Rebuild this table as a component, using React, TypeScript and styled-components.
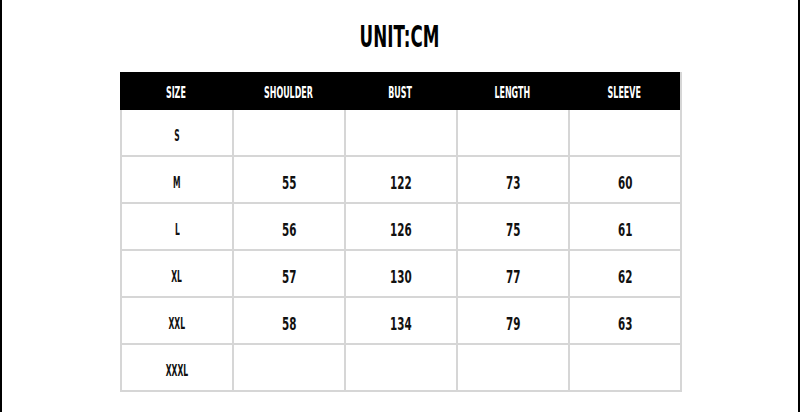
import * as React from 'react';
import styled, { createGlobalStyle } from 'styled-components';

const GlobalStyle = createGlobalStyle`
  html, body {
    margin: 0;
    padding: 0;
    background: #fff;
  }
`;

const LINE = '#d6d6d6';
const FONT = '"DejaVu Sans Condensed", "DejaVu Sans", sans-serif';

interface SizeRow {
  size: string;
  values: string[];
}

const rows: SizeRow[] = [
  { size: 'S', values: ['', '', '', ''] },
  { size: 'M', values: ['55', '122', '73', '60'] },
  { size: 'L', values: ['56', '126', '75', '61'] },
  { size: 'XL', values: ['57', '130', '77', '62'] },
  { size: 'XXL', values: ['58', '134', '79', '63'] },
  { size: 'XXXL', values: ['', '', '', ''] },
];

const headers = ['SIZE', 'SHOULDER', 'BUST', 'LENGTH', 'SLEEVE'];

const Page = styled.div`
  width: 796px;
  height: 412px;
  border-left: 2px solid #000;
  border-right: 2px solid #000;
  display: flex;
  flex-direction: column;
  align-items: center;
  background: #fff;
  font-family: ${FONT};
  font-weight: bold;
`;

const Title = styled.div`
  height: 72px;
  width: 100%;
  display: flex;
  justify-content: center;
  align-items: center;
  padding-top: 1px;
  box-sizing: border-box;
`;

const Squeeze = styled.span<{ $scale: number }>`
  display: inline-block;
  transform: scaleX(${p => p.$scale});
  transform-origin: center;
  white-space: nowrap;
`;

const TitleText = styled(Squeeze)`
  font-size: 31px;
  line-height: 1;
  color: #000;
`;

const Grid = styled.div`
  display: grid;
  grid-template-columns: repeat(5, 112px);
  border-right: 2px solid ${LINE};
  margin-left: 2px;
`;

const HeadCell = styled.div`
  height: 38px;
  background: #000;
  color: #fff;
  display: flex;
  align-items: center;
  justify-content: center;
  font-size: 15px;
  padding-top: 3px;
  box-sizing: border-box;
`;

const Cell = styled.div`
  height: 47px;
  border-left: 2px solid ${LINE};
  border-bottom: 2px solid ${LINE};
  box-sizing: border-box;
  display: flex;
  align-items: center;
  justify-content: center;
  padding-top: 6px;
  color: #111;
`;

const SizeText = styled(Squeeze)`
  font-size: 15px;
`;

const NumText = styled(Squeeze)`
  font-size: 18px;
`;

export default function App() {
  return (
    <>
      <GlobalStyle />
      <Page>
        <Title>
          <TitleText $scale={0.6}>UNIT:CM</TitleText>
        </Title>
        <Grid>
          {headers.map(h => (
            <HeadCell key={h}>
              <Squeeze $scale={0.59}>{h}</Squeeze>
            </HeadCell>
          ))}
          {rows.map(r => (
            <React.Fragment key={r.size}>
              <Cell>
                <SizeText $scale={0.56}>{r.size}</SizeText>
              </Cell>
              {r.values.map((v, i) => (
                <Cell key={i}>
                  <NumText $scale={0.64}>{v}</NumText>
                </Cell>
              ))}
            </React.Fragment>
          ))}
        </Grid>
      </Page>
    </>
  );
}
